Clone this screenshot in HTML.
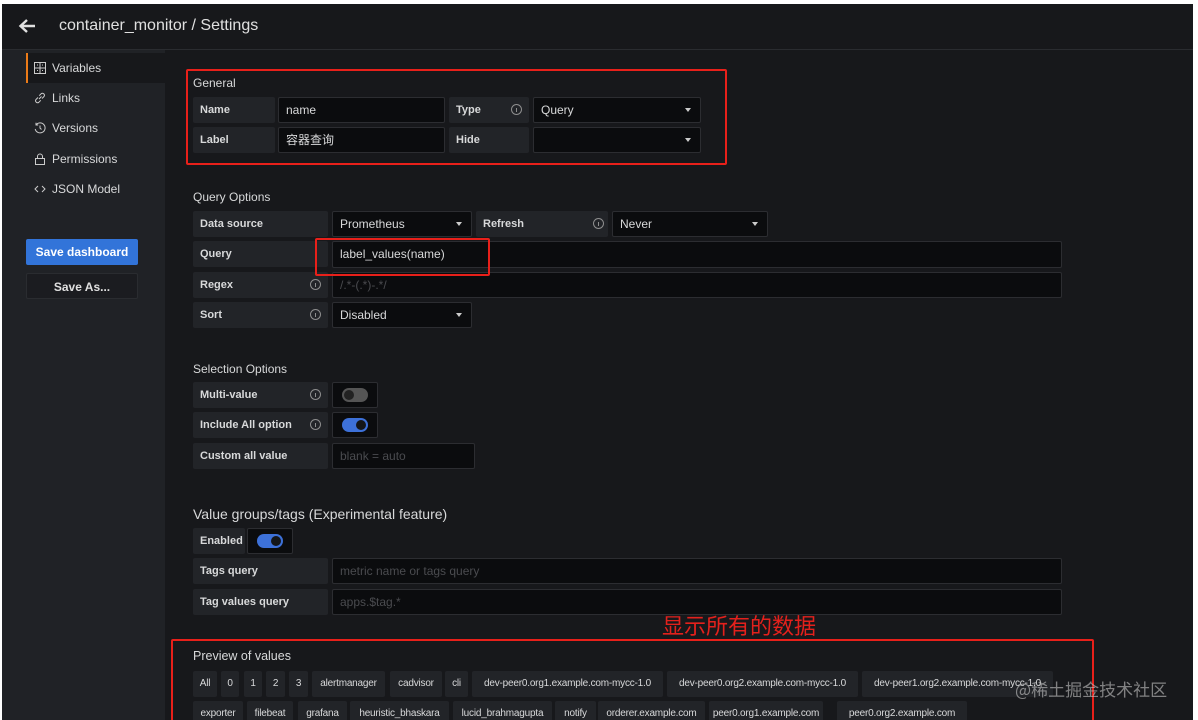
<!DOCTYPE html>
<html><head><meta charset="utf-8"><style>
*{box-sizing:border-box;margin:0;padding:0}
html,body{width:1198px;height:720px;overflow:hidden;background:#fff;font-family:"Liberation Sans","Noto Sans CJK SC",sans-serif}
#app{position:absolute;left:2px;top:4px;width:1191px;height:716px;background:#17181b;overflow:hidden}
.a{position:absolute}
.hdr{left:0;top:0;width:1191px;height:46px;background:#17181b;border-bottom:1px solid #2a2c30}
.side{left:0;top:46px;width:163px;height:680px;background:#202226}
.nav{position:absolute;left:24px;width:139px;height:30px;color:#d8d9da;font-size:12px;line-height:30px;padding-left:8px;display:flex;align-items:center;gap:6px}
.nav svg{width:12px;height:12px}
.t{color:#d8d9da;font-size:12px}
.lbl{position:absolute;background:#222428;color:#d8d9da;font-size:11px;font-weight:bold;height:26px;line-height:26px;padding-left:7px;border-radius:2px}
.inp{position:absolute;background:#0b0c0e;border:1px solid #2c2d31;height:26px;line-height:24px;color:#d8d9da;font-size:12px;padding-left:7px;border-radius:2px}
.ph{color:#4a4b4f}
.car{position:absolute;right:9px;top:10px;width:0;height:0;border-left:3px solid transparent;border-right:3px solid transparent;border-top:4px solid #ccc}
.info{position:absolute;top:7px;width:11px;height:11px;border:1px solid #8e8e8e;border-radius:50%}
.info:after{content:"";position:absolute;left:4px;top:3px;width:1px;height:4px;background:#8e8e8e}
.red{position:absolute;border:2px solid #e8201a;border-radius:2px}
.sw{position:absolute;width:26px;height:14px;border-radius:7px}
.sw i{position:absolute;top:2px;width:10px;height:10px;border-radius:50%;background:#141619}
.chip{position:absolute;height:26px;line-height:26px;background:#222428;color:#d8d9da;font-size:10px;letter-spacing:-0.2px;text-align:center;border-radius:2px;white-space:nowrap;overflow:hidden}
</style></head><body><div id="app">
<div class="a hdr"></div>
<svg class="a" style="left:16px;top:14px" width="18" height="16" viewBox="0 0 18 16"><path d="M17 8H3M9 2L2.5 8 9 14" stroke="#e0e0e0" stroke-width="2.4" fill="none"/></svg>
<div class="a" style="left:57px;top:13px;color:#e0e0e0;font-size:16px">container_monitor / Settings</div>
<div class="a side"></div>
<div class="nav" style="top:49px;background:#17181b;border-left:2px solid #eb7b18;padding-left:6px"><svg viewBox="0 0 12 12"><rect x="0.5" y="0.5" width="11" height="11" fill="none" stroke="#ccc"/><path d="M6 0.5V11.5M0.5 6H11.5M3 3H4M8 3H9M3 8.5H4M8 8.5H9" stroke="#ccc"/></svg>Variables</div>
<div class="nav" style="top:79px"><svg viewBox="0 0 12 12"><path d="M5 7L7.5 4.5M4 5.5L2 7.5a2 2 0 0 0 2.8 2.8L6.8 8.3M8 6.5L10 4.5a2 2 0 0 0-2.8-2.8L5.2 3.7" stroke="#ccc" fill="none"/></svg>Links</div>
<div class="nav" style="top:109px"><svg viewBox="0 0 12 12"><path d="M2 3A5 5 0 1 1 1.2 7M2 0.8V3H4.2M6 3.5V6L7.5 7.5" stroke="#ccc" fill="none"/></svg>Versions</div>
<div class="nav" style="top:140px"><svg viewBox="0 0 12 12"><rect x="1.5" y="5.5" width="9" height="6" fill="none" stroke="#ccc"/><path d="M3.5 5.5V3.5a2.5 2.5 0 0 1 5 0V5.5" stroke="#ccc" fill="none"/></svg>Permissions</div>
<div class="nav" style="top:170px"><svg viewBox="0 0 12 12"><path d="M4 3L1 6 4 9M8 3L11 6 8 9" stroke="#ccc" fill="none"/></svg>JSON Model</div>
<div class="a" style="left:24px;top:235px;width:112px;height:26px;background:#3274d9;color:#fff;font-size:12px;font-weight:bold;text-align:center;line-height:26px;border-radius:2px">Save dashboard</div>
<div class="a" style="left:24px;top:269px;width:112px;height:26px;background:#1b1c20;color:#e0e0e0;font-size:12px;font-weight:bold;text-align:center;line-height:26px;border-radius:2px;border:1px solid #2a2c30">Save As...</div>

<div class="a t" style="left:191px;top:72px">General</div>
<div class="lbl" style="left:191px;top:93px;width:82px">Name</div>
<div class="inp" style="left:276px;top:93px;width:167px">name</div>
<div class="lbl" style="left:447px;top:93px;width:80px">Type<span class="info" style="left:62px"></span></div>
<div class="inp" style="left:531px;top:93px;width:168px">Query<span class="car"></span></div>
<div class="lbl" style="left:191px;top:123px;width:82px">Label</div>
<div class="inp" style="left:276px;top:123px;width:167px">容器查询</div>
<div class="lbl" style="left:447px;top:123px;width:80px">Hide</div>
<div class="inp" style="left:531px;top:123px;width:168px"><span class="car"></span></div>
<div class="red" style="left:184px;top:65px;width:541px;height:96px"></div>

<div class="a t" style="left:191px;top:186px">Query Options</div>
<div class="lbl" style="left:191px;top:207px;width:135px">Data source</div>
<div class="inp" style="left:330px;top:207px;width:140px">Prometheus<span class="car"></span></div>
<div class="lbl" style="left:474px;top:207px;width:132px">Refresh<span class="info" style="left:117px"></span></div>
<div class="inp" style="left:610px;top:207px;width:156px">Never<span class="car"></span></div>
<div class="lbl" style="left:191px;top:237px;width:135px">Query</div>
<div class="inp" style="left:330px;top:237px;width:730px;height:27px">label_values(name)</div>
<div class="lbl" style="left:191px;top:268px;width:135px">Regex<span class="info" style="left:117px"></span></div>
<div class="inp" style="left:330px;top:268px;width:730px"><span class="ph">/.*-(.*)-.*/</span></div>
<div class="lbl" style="left:191px;top:298px;width:135px">Sort<span class="info" style="left:117px"></span></div>
<div class="inp" style="left:330px;top:298px;width:140px">Disabled<span class="car"></span></div>
<div class="red" style="left:313px;top:234px;width:175px;height:38px"></div>

<div class="a t" style="left:191px;top:358px">Selection Options</div>
<div class="lbl" style="left:191px;top:378px;width:135px">Multi-value<span class="info" style="left:117px"></span></div>
<div class="inp" style="left:330px;top:378px;width:46px"><span class="sw" style="left:9px;top:5px;background:#555"><i style="left:2px;background:#222"></i></span></div>
<div class="lbl" style="left:191px;top:408px;width:135px">Include All option<span class="info" style="left:117px"></span></div>
<div class="inp" style="left:330px;top:408px;width:46px"><span class="sw" style="left:9px;top:5px;background:#3d71d9"><i style="left:14px"></i></span></div>
<div class="lbl" style="left:191px;top:439px;width:135px">Custom all value</div>
<div class="inp" style="left:330px;top:439px;width:143px"><span class="ph">blank = auto</span></div>

<div class="a" style="left:191px;top:502px;color:#d8d9da;font-size:14px">Value groups/tags (Experimental feature)</div>
<div class="lbl" style="left:191px;top:524px;width:52px">Enabled</div>
<div class="inp" style="left:245px;top:524px;width:46px"><span class="sw" style="left:9px;top:5px;background:#3d71d9"><i style="left:14px"></i></span></div>
<div class="lbl" style="left:191px;top:554px;width:135px">Tags query</div>
<div class="inp" style="left:330px;top:554px;width:730px"><span class="ph">metric name or tags query</span></div>
<div class="lbl" style="left:191px;top:585px;width:135px">Tag values query</div>
<div class="inp" style="left:330px;top:585px;width:730px"><span class="ph">apps.$tag.*</span></div>

<div class="a" style="left:660px;top:608px;color:#e3211c;font-size:22px;font-family:'Noto Sans CJK SC',sans-serif;line-height:26px">显示所有的数据</div>
<div class="a t" style="left:191px;top:645px;font-size:12.5px">Preview of values</div>
<div class="chip" style="left:191px;top:667px;width:24px">All</div>
<div class="chip" style="left:219px;top:667px;width:18px">0</div>
<div class="chip" style="left:242px;top:667px;width:18px">1</div>
<div class="chip" style="left:264px;top:667px;width:19px">2</div>
<div class="chip" style="left:287px;top:667px;width:19px">3</div>
<div class="chip" style="left:310px;top:667px;width:73px">alertmanager</div>
<div class="chip" style="left:388px;top:667px;width:52px">cadvisor</div>
<div class="chip" style="left:443px;top:667px;width:23px">cli</div>
<div class="chip" style="left:470px;top:667px;width:191px">dev-peer0.org1.example.com-mycc-1.0</div>
<div class="chip" style="left:665px;top:667px;width:191px">dev-peer0.org2.example.com-mycc-1.0</div>
<div class="chip" style="left:860px;top:667px;width:191px">dev-peer1.org2.example.com-mycc-1.0</div>
<div class="chip" style="left:191px;top:697px;width:50px">exporter</div>
<div class="chip" style="left:245px;top:697px;width:46px">filebeat</div>
<div class="chip" style="left:296px;top:697px;width:49px">grafana</div>
<div class="chip" style="left:348px;top:697px;width:99px">heuristic_bhaskara</div>
<div class="chip" style="left:451px;top:697px;width:99px">lucid_brahmagupta</div>
<div class="chip" style="left:553px;top:697px;width:41px">notify</div>
<div class="chip" style="left:596px;top:697px;width:107px">orderer.example.com</div>
<div class="chip" style="left:707px;top:697px;width:114px">peer0.org1.example.com</div>
<div class="chip" style="left:835px;top:697px;width:130px">peer0.org2.example.com</div>
<div class="red" style="left:169px;top:635px;width:923px;height:90px"></div>
<div class="a" style="left:1013px;top:672px;color:rgba(200,200,200,0.6);font-size:17px;font-family:'Noto Sans CJK SC',sans-serif">@稀土掘金技术社区</div>
</div></body></html>
